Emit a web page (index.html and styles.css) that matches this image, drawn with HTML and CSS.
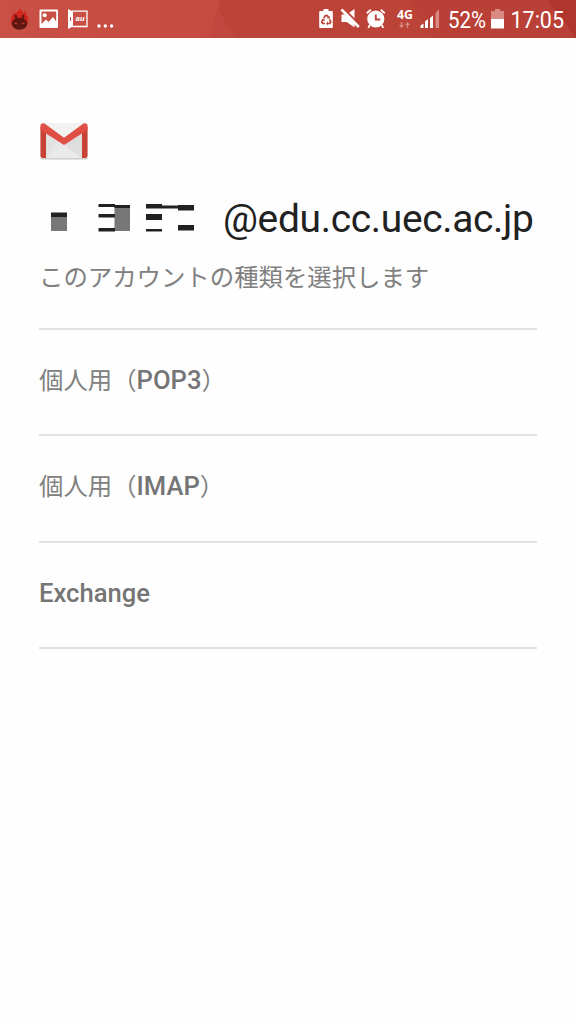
FILE: index.html
```html
<!DOCTYPE html>
<html lang="ja">
<head>
<meta charset="utf-8">
<title>Gmail</title>
<link rel="stylesheet" href="styles.css">
</head>
<body>
<header class="status">
  <svg class="facets" width="576" height="38" viewBox="0 0 576 38">
    <path d="M220 0H576V38H210z" fill="#bc4338"/>
    <path d="M218 9L210 38H235z" fill="#c1483e"/>
    <path d="M410 0H576V38H433z" fill="#b94036"/>
    <path d="M548 0H576V38z" fill="#ae362d"/>
  </svg>
  <div class="group">
    <svg width="20" height="24" viewBox="9 7 20 24">
      <path fill="#d3251f" d="M10.500 24c-1-5 0-9 3-12l1 2c1-2 3-2 4-5.500 2 1 3 3 4 5l1-3c2 2 2 4 2 6l1-1c1 3 1 6-1 9z"/>
      <ellipse cx="18.500" cy="23.700" rx="7.800" ry="6" fill="#601711"/>
      <path d="M15.700 20l-1-4M21.300 20l1-4" stroke="#601711" stroke-width="2.400" stroke-linecap="round"/>
      <path d="M13.500 23l3 .8M23.500 23l-3 .8" stroke="#b0352d" stroke-width="1.300"/>
    </svg>
    <svg width="20" height="24" viewBox="39 7 20 24">
      <path fill="#fff" fill-rule="evenodd" d="M40.500 9.500h16.500q1 0 1 1v16.500q0 1-1 1H40.500q-1 0-1-1V10.500q0-1 1-1zM41.500 11.500v12.500l4.500-4.500 2.500 2.500 4.500-5 3.200 4.500v-10z"/>
      <circle cx="44.700" cy="15.300" r="2" fill="#fff"/>
    </svg>
    <svg width="21" height="24" viewBox="68 7 21 24">
      <path d="M68 9l5 2.500v15L68 29z" fill="#fff"/>
      <path d="M72 11.200h15v15.300H72" fill="none" stroke="#fff" stroke-width="1.300"/>
      <path d="M70.500 17v4" stroke="#c75045"/>
      <text x="75.500" y="21" class="au" textLength="9" lengthAdjust="spacingAndGlyphs">au</text>
    </svg>
    <svg width="18" height="24" viewBox="98 7 18 24" fill="#fff"><circle cx="99" cy="26" r="1.700"/><circle cx="105.300" cy="26" r="1.700"/><circle cx="111.600" cy="26" r="1.700"/></svg>
  </div>
  <div class="group">
    <svg width="14" height="24" viewBox="318.500 7 14 24">
      <path fill="#fff" d="M323 9h5v2h3.500q.8 0 .8.800V27.200q0 .8-.8.800h-12q-.8 0-.8-.800V11.800q0-.800.8-.800H323z"/>
      <g fill="none" stroke="#bd4338" stroke-width="1.700"><path d="M323.200 18.200l1.600-2.600h2l1.300 2M329 19.400l1.300 2.500-1 1.600h-2.500M324.500 23.500h-2.400l-1-1.600 1.500-2.500"/></g>
      <path d="M326.500 18.500h3v-2.500zM327.500 21.500v4l-2-2zM321 19.200l2.700-.5.800 2.500z" fill="#bd4338"/>
    </svg>
    <svg width="19" height="24" viewBox="341 7 19 24">
      <path fill="#fff" d="M341.500 14.500h5.200l7.800-5.500v18.500l-7.800-5.500h-5.200z"/>
      <path d="M342.800 7.800l17 17.200" stroke="#bd4338" stroke-width="2"/>
      <path d="M341.500 9.500l17.300 17.500" stroke="#fff" stroke-width="2.600"/>
    </svg>
    <svg width="20" height="24" viewBox="366 7 20 24">
      <circle cx="375.800" cy="19" r="8.600" fill="#fff"/>
      <path d="M366.800 13.300l4-3.500M384.800 13.300l-4-3.500M369.800 25l-1.500 2.800M381.800 25l1.500 2.800" stroke="#fff" stroke-width="1.800"/>
      <path d="M375.800 14.500v5h4.500" fill="none" stroke="#bd4338" stroke-width="1.900"/>
    </svg>
    <svg width="18" height="24" viewBox="396 7 18 24">
      <text x="397" y="19" class="net" textLength="16" lengthAdjust="spacingAndGlyphs">4G</text>
      <path d="M401.500 22v4M407.500 28v-4" stroke="#d98f87" stroke-width="1.300"/><path d="M399 25h5l-2.500 3zM405 25h5l-2.500-3z" fill="#d98f87"/>
    </svg>
    <svg width="20" height="24" viewBox="420 7 20 24" fill="#fff">
      <path d="M420.500 28v-2.500l3-2V28zM425 28v-6.500l3-2.500v9zM430 28V18l3-2.500V28z"/><path d="M435.500 28V13l3.500-3.500V28z" fill="#d98a82"/>
    </svg>
    <svg width="40" height="38" viewBox="447 0 40 38"><text x="448" y="28" class="clock" textLength="38" lengthAdjust="spacingAndGlyphs">52%</text></svg>
    <svg width="14" height="24" viewBox="491 7 14 24"><path d="M495 9h5v2h4v8h-13v-8h4z" fill="#d98a82"/><path d="M491 19h13v9.500h-13z" fill="#fff"/></svg>
    <svg width="55" height="38" viewBox="510 0 55 38"><text x="510.500" y="28" class="clock" textLength="53.500" lengthAdjust="spacingAndGlyphs">17:05</text></svg>
  </div>
</header>
<main class="setup">
  <svg class="logo" width="50" height="40" viewBox="39 121 50 40">
    <rect x="40.500" y="124" width="47" height="35.400" rx="2.500" fill="#c8c8c8"/>
    <rect x="40.500" y="123.500" width="47" height="34.700" rx="2.500" fill="#e7e7e7"/>
    <path d="M46 158l18-13 18 13z" fill="#eaeaea"/><path d="M46 134v24l12-17z" fill="#e1e1e1"/><path d="M64 145l18-11v24z" fill="#dedede"/>
    <path d="M44 123.500h40L64 138z" fill="#f2f2f2"/>
    <path d="M40.500 127h5.500v31h-3q-2.500 0-2.500-2.500zM87.500 127H82v31h3q2.500 0 2.500-2.500z" fill="#c84236"/>
    <path d="M40.500 130v-4q0-2.700 2.700-2.700 1.200 0 2.300.9L64 137.700l18.500-13.500q1.100-.9 2.300-.9 2.700 0 2.700 2.700v4L64 145z" fill="#df4f43"/>
  </svg>
  <h1 class="address">
    <svg width="184" height="50" viewBox="39 195 184 50">
      <path d="M51 217h16v14H51zM114.500 207H130v24h-15.500z" fill="#777"/>
      <path d="M51 212.500h16v4.500H51zM98.500 204H115v3H98.500zM98.500 214H115v3.500H98.500zM98.500 228H115v3.500H98.500zM114.500 205H130v3h-15.500zM146 204h16v4.500h-16zM146 214h16v6h-16zM146 229h16v2.500h-16zM162 205.500h16v3h-16zM178 205h16v5.500h-16zM178 225h16v5.500h-16z" fill="#212121"/>
    </svg>
    <span>@edu.cc.uec.ac.jp</span>
  </h1>
  <p class="prompt">このアカウントの種類を選択します</p>
  <ul class="types">
    <li>個人用（<b>POP3</b>）</li>
    <li>個人用（<b>IMAP</b>）</li>
    <li><b>Exchange</b></li>
  </ul>
</main>
</body>
</html>
```
FILE: styles.css
```css
* { box-sizing: border-box; margin: 0; padding: 0; }
body { min-height: 1024px; background: #fefefe; font-family: Roboto, "Noto Sans CJK JP", sans-serif; }
svg { display: block; flex: none; overflow: visible; }
.status {
  position: relative;
  height: 38px; padding: 0 11px 0 10px;
  display: flex; justify-content: space-between; align-items: center;
  background: linear-gradient(90deg, #c95045 0, #c54b40 220px);
}
.facets { position: absolute; inset: 0; }
.group { position: relative; display: flex; align-items: center; gap: 9px; }
.group:last-child { gap: 0; }
.group:last-child svg { margin-left: 8.500px; }
.group:last-child svg:nth-child(3) { margin-left: 6px; }
.group:last-child svg:nth-child(4) { margin-left: 10px; }
.group:last-child svg:nth-child(5) { margin-left: 6px; }
.group:last-child svg:nth-child(6) { margin-left: 7px; }
.group:last-child svg:nth-child(7) { margin-left: 4px; }
.group:last-child svg:nth-child(8) { margin-left: 5px; }
.clock { font-size: 24px; fill: #fff; }
.net { font: bold 12px "Open Sans", sans-serif; fill: #fff; }
.au { font: italic bold 7px Roboto, sans-serif; fill: #fff; }
.setup { padding: 83px 39px 0; }
.address { display: flex; align-items: center; height: 50px; margin-top: 34px; font-size: 38.900px; font-weight: 400; letter-spacing: -.300px; color: #212121; white-space: nowrap; }
.address span { padding-bottom: 3px; }
.prompt { height: 83px; padding-top: 12.500px; font-family: "Noto Sans CJK JP", sans-serif; font-size: 24.400px; line-height: 36px; color: #808080; font-weight: 400; }
.types { list-style: none; border-top: 2px solid #e2e2e2; }
.types li { height: 106.300px; padding-top: 32px; border-bottom: 2px solid #e2e2e2; font-size: 24.400px; line-height: 36px; color: #808080; font-weight: 400; }
.types b { font-size: 25.600px; font-weight: 500; color: #757575; }
```
